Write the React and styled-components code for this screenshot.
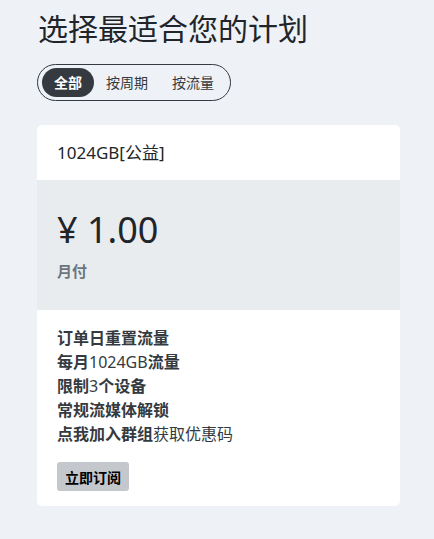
import React, { useState } from "react";
import styled, { createGlobalStyle } from "styled-components";

const Global = createGlobalStyle`
  html, body { margin: 0; padding: 0; background: #eef1f6; }
  body { font-family: "Noto Sans", "Noto Sans CJK SC", sans-serif; color: #212529; }
`;

const Page = styled.div`
  padding: 11px 34px 32px 37px;
`;

const Title = styled.h1`
  margin: 0 0 17px 1px;
  font-size: 30px;
  line-height: 36px;
  font-weight: 400;
  color: #212529;
`;

const Segmented = styled.div`
  display: inline-flex;
  border: 1px solid #343a40;
  border-radius: 999px;
  padding: 3px 4px 3px 4px;
  margin-bottom: 24px;
`;

const SegItem = styled.button`
  border: 0;
  font-family: inherit;
  font-size: 14px;
  line-height: 29px;
  height: 29px;
  padding: 0 12px;
  border-radius: 999px;
  cursor: pointer;
  font-weight: ${(p) => (p.$active ? 700 : 400)};
  background: ${(p) => (p.$active ? "#343a40" : "transparent")};
  color: ${(p) => (p.$active ? "#ffffff" : "#343a40")};
`;

const Card = styled.div`
  width: 363px;
  background: #ffffff;
  border-radius: 5px;
  overflow: hidden;
`;

const CardHeader = styled.div`
  padding: 16px 20px 15px;
  font-size: 17px;
  line-height: 24px;
  color: #212529;
`;

const PriceBox = styled.div`
  background: #e9ecef;
  padding: 32px 20px 28px;
  display: flex;
  flex-direction: column;
  gap: 12px;
`;

const Price = styled.div`
  font-size: 36px;
  line-height: 36px;
  color: #212529;
`;

const Period = styled.div`
  font-size: 15px;
  line-height: 22px;
  font-weight: 700;
  color: #6c757d;
`;

const Body = styled.div`
  padding: 16px 20px 15px;
`;

const Features = styled.div`
  display: flex;
  flex-direction: column;
  font-size: 16px;
  line-height: 24px;
  color: #343a40;
`;

const Line = styled.div``;

const B = styled.b`
  font-weight: 700;
`;

const N = styled.span`
  font-weight: 400;
`;

const SubscribeButton = styled.button`
  margin-top: 16px;
  border: 0;
  border-radius: 3px;
  background: #c4c7cc;
  color: #000;
  font-family: inherit;
  font-size: 14px;
  font-weight: 700;
  height: 29px;
  padding: 0 8px;
  cursor: pointer;
`;

export default function App() {
  const [tab, setTab] = useState(0);
  const tabs = ["全部", "按周期", "按流量"];
  return (
    <Page>
      <Global />
      <Title>选择最适合您的计划</Title>
      <Segmented>
        {tabs.map((t, i) => (
          <SegItem key={t} $active={tab === i} onClick={() => setTab(i)}>
            {t}
          </SegItem>
        ))}
      </Segmented>
      <Card>
        <CardHeader>1024GB[公益]</CardHeader>
        <PriceBox>
          <Price>¥ 1.00</Price>
          <Period>月付</Period>
        </PriceBox>
        <Body>
          <Features>
            <Line><B>订单日重置流量</B></Line>
            <Line><B>每月</B><N>1024GB</N><B>流量</B></Line>
            <Line><B>限制</B><N>3</N><B>个设备</B></Line>
            <Line><B>常规流媒体解锁</B></Line>
            <Line><B>点我加入群组</B><N>获取优惠码</N></Line>
          </Features>
          <SubscribeButton>立即订阅</SubscribeButton>
        </Body>
      </Card>
    </Page>
  );
}
